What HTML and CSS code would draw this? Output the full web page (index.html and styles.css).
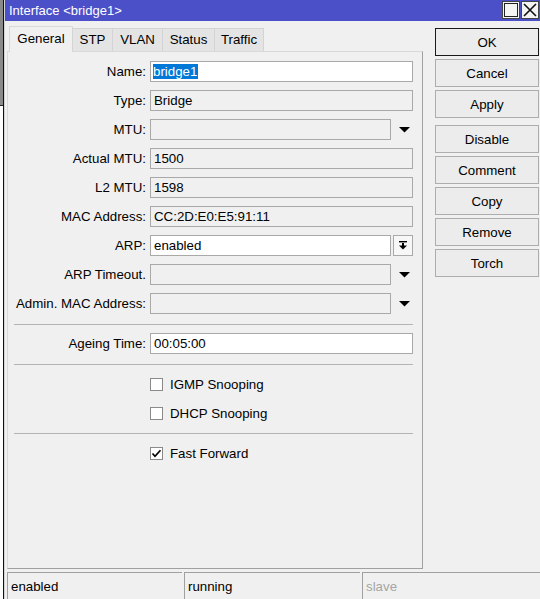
FILE: index.html
```html
<!DOCTYPE html>
<html>
<head>
<meta charset="utf-8">
<title>Interface &lt;bridge1&gt;</title>
<link rel="stylesheet" href="styles.css">
</head>
<body>
<div class="screen">
  <div class="bgstrip"><div class="bg-top"></div><div class="bg-bottom"></div></div>
  <div class="frame-line"></div>
  <div class="frame-inner"></div>
  <div class="dialog">
    <div class="titlebar">
      <span class="title">Interface &lt;bridge1&gt;</span>
      <div class="wctl">
        <div class="wbtn"><svg width="14" height="14" viewBox="0 0 14 14"><rect x="0.5" y="0.5" width="13" height="13" fill="none" stroke="#222" stroke-width="1"/></svg></div>
        <div class="wbtn"><svg width="14" height="14" viewBox="0 0 14 14"><path d="M1 1 L13 13 M13 1 L1 13" stroke="#111" stroke-width="1.6"/></svg></div>
      </div>
    </div>
    <div class="main">
      <div class="leftcol">
        <div class="tabs">
          <div class="tab active w-general">General</div>
          <div class="tab w-stp">STP</div>
          <div class="tab w-vlan">VLAN</div>
          <div class="tab w-status">Status</div>
          <div class="tab w-traffic">Traffic</div>
        </div>
        <div class="panel">
          <div class="group">
            <div class="row"><div class="lbl">Name:</div><div class="field white"><span class="sel">bridge1</span></div></div>
            <div class="row"><div class="lbl">Type:</div><div class="field">Bridge</div></div>
            <div class="row"><div class="lbl">MTU:</div><div class="field"></div><div class="drop"><svg width="22" height="21" viewBox="0 0 22 21"><polygon points="8,8 19,8 13.5,13.5" fill="#000"/></svg></div></div>
            <div class="row"><div class="lbl">Actual MTU:</div><div class="field">1500</div></div>
            <div class="row"><div class="lbl">L2 MTU:</div><div class="field">1598</div></div>
            <div class="row"><div class="lbl">MAC Address:</div><div class="field">CC:2D:E0:E5:91:11</div></div>
            <div class="row"><div class="lbl">ARP:</div><div class="field white">enabled</div><div class="ddbtn"><svg width="18" height="19" viewBox="0 0 18 19"><rect x="5" y="5" width="8" height="1.4" fill="#000"/><rect x="8" y="7" width="2" height="3" fill="#000"/><polygon points="5,9.5 13,9.5 9,13.5" fill="#000"/></svg></div></div>
            <div class="row"><div class="lbl">ARP Timeout.</div><div class="field"></div><div class="drop"><svg width="22" height="21" viewBox="0 0 22 21"><polygon points="8,8 19,8 13.5,13.5" fill="#000"/></svg></div></div>
            <div class="row"><div class="lbl">Admin. MAC Address:</div><div class="field"></div><div class="drop"><svg width="22" height="21" viewBox="0 0 22 21"><polygon points="8,8 19,8 13.5,13.5" fill="#000"/></svg></div></div>
          </div>
          <div class="sep"></div>
          <div class="row after-sep"><div class="lbl">Ageing Time:</div><div class="field white">00:05:00</div></div>
          <div class="sep"></div>
          <div class="chk first"><div class="box"></div><span class="chk-text">IGMP Snooping</span></div>
          <div class="chk second"><div class="box"></div><span class="chk-text">DHCP Snooping</span></div>
          <div class="sep sep-chk"></div>
          <div class="chk first"><div class="box"><svg width="11" height="11" viewBox="0 0 11 11"><polyline points="1.5,5.5 4,8.3 9.5,2.2" fill="none" stroke="#000" stroke-width="1.7"/></svg></div><span class="chk-text">Fast Forward</span></div>
        </div>
      </div>
      <div class="btncol">
        <div class="btn default">OK</div>
        <div class="btn">Cancel</div>
        <div class="btn">Apply</div>
        <div class="btn spaced">Disable</div>
        <div class="btn">Comment</div>
        <div class="btn">Copy</div>
        <div class="btn">Remove</div>
        <div class="btn">Torch</div>
      </div>
    </div>
    <div class="statusbar">
      <div class="sb sb1">enabled</div>
      <div class="sb sb2">running</div>
      <div class="sb sb3 dim">slave</div>
    </div>
  </div>
</div>
</body>
</html>
```

FILE: styles.css
```css
* { box-sizing: border-box; margin: 0; padding: 0; }
html, body { width: 540px; height: 599px; overflow: hidden; }
body {
  font-family: "Liberation Sans", Arial, sans-serif;
  font-size: 13.3px;
  color: #000;
  background: #f0f0f0;
}
.screen { display: flex; width: 540px; height: 599px; }
.bgstrip { width: 3px; display: flex; flex-direction: column; background: #fff; }
.bg-top { height: 106px; background: #8a8a8a; border-bottom: 1px solid #222; }
.bg-bottom { flex: 1; background: #fdfdfd; }
.frame-line { width: 1px; background: #111; }
.frame-inner { width: 1px; background: #d4d4d4; }
.dialog { flex: 1; display: flex; flex-direction: column; background: #f0f0f0; }

.titlebar {
  height: 21px;
  flex: none;
  background: #4c50c8;
  color: #fff;
  display: flex;
  align-items: center;
  justify-content: space-between;
  padding: 0 1px 0 4px;
}
.title { font-size: 13px; line-height: 21px; }
.wctl { display: flex; gap: 1px; align-self: flex-start; margin-top: 1px; }
.wbtn {
  width: 18px; height: 18px;
  background: #f4f4f4;
  border: 1px solid #444;
  display: flex; align-items: center; justify-content: center;
}

.main { flex: 1; display: flex; padding-left: 2px; gap: 12px; min-height: 0; }
.leftcol { width: 416px; display: flex; flex-direction: column; padding: 7px 0 3px; }

.tabs { height: 23px; flex: none; display: flex; align-items: flex-end; padding-left: 2px; position: relative; z-index: 1; }
.tab {
  height: 23px;
  background: #e4e4e4;
  border: 1px solid #d4d4d4;
  border-bottom: none;
  margin-right: -1px;
  display: flex; align-items: center; justify-content: center;
  line-height: 1;
}
.tab.active {
  height: 26px;
  margin-bottom: -1px;
  background: #f0f0f0;
  border-color: #d9d9d9;
  padding-bottom: 2px;
}
.w-general { width: 64px; }
.w-stp { width: 41px; }
.w-vlan { width: 51px; }
.w-status { width: 53px; }
.w-traffic { width: 50px; }

.panel {
  flex: 1;
  border: 1px solid;
  border-color: #d9d9d9 #a0a0a0 #a0a0a0 #d9d9d9;
  padding: 9px 9px 0 0;
  display: flex;
  flex-direction: column;
}
.group { display: flex; flex-direction: column; gap: 8px; }
.row { display: flex; align-items: center; height: 21px; flex: none; }
.lbl { width: 138px; margin-right: 4px; text-align: right; white-space: nowrap; }
.field {
  flex: 1;
  height: 21px;
  border: 1px solid #a9a9a9;
  background: #f0f0f0;
  padding-left: 3px;
  line-height: 19px;
  white-space: nowrap;
}
.field.white { background: #fff; }
.sel { background: #0078d7; color: #fff; display: inline-block; line-height: 15px; padding: 0 1px 0 0; margin-left: -1px; }
.drop { width: 22px; height: 21px; }
.drop svg, .ddbtn svg { display: block; }
.ddbtn {
  width: 20px; height: 21px;
  margin-left: 2px;
  border: 1px solid #a9a9a9;
  background: #f7f7f7;
}

.sep { height: 1px; background: #b4b4b4; margin: 10px 0 0 6px; flex: none; }
.after-sep { margin-top: 8px; }
.sep-chk { margin-top: 13px; }
.chk { display: flex; align-items: center; height: 13px; padding-left: 142px; flex: none; }
.chk.first { margin-top: 13px; }
.chk.second { margin-top: 16px; }
.box {
  width: 13px; height: 13px;
  border: 1px solid #8a8a8a;
  background: #fff;
  display: flex; align-items: center; justify-content: center;
}
.chk-text { margin-left: 7px; }

.btncol { width: 104px; padding-top: 7px; display: flex; flex-direction: column; gap: 3px; }
.btn {
  height: 28px;
  border: 1px solid #adadad;
  background: #ececec;
  display: flex; align-items: center; justify-content: center;
}
.btn.default { border-color: #1a1a1a; }
.btn.spaced { margin-top: 4px; }

.statusbar { height: 27px; flex: none; display: flex; padding-left: 2px; gap: 2px; }
.sb {
  border-top: 1px solid #a0a0a0;
  border-left: 1px solid #a0a0a0;
  padding-left: 3px;
  display: flex; align-items: center;
}
.sb1 { width: 175px; }
.sb2 { width: 176px; }
.sb3 { flex: 1; }
.dim { color: #a6a6a6; }
```
